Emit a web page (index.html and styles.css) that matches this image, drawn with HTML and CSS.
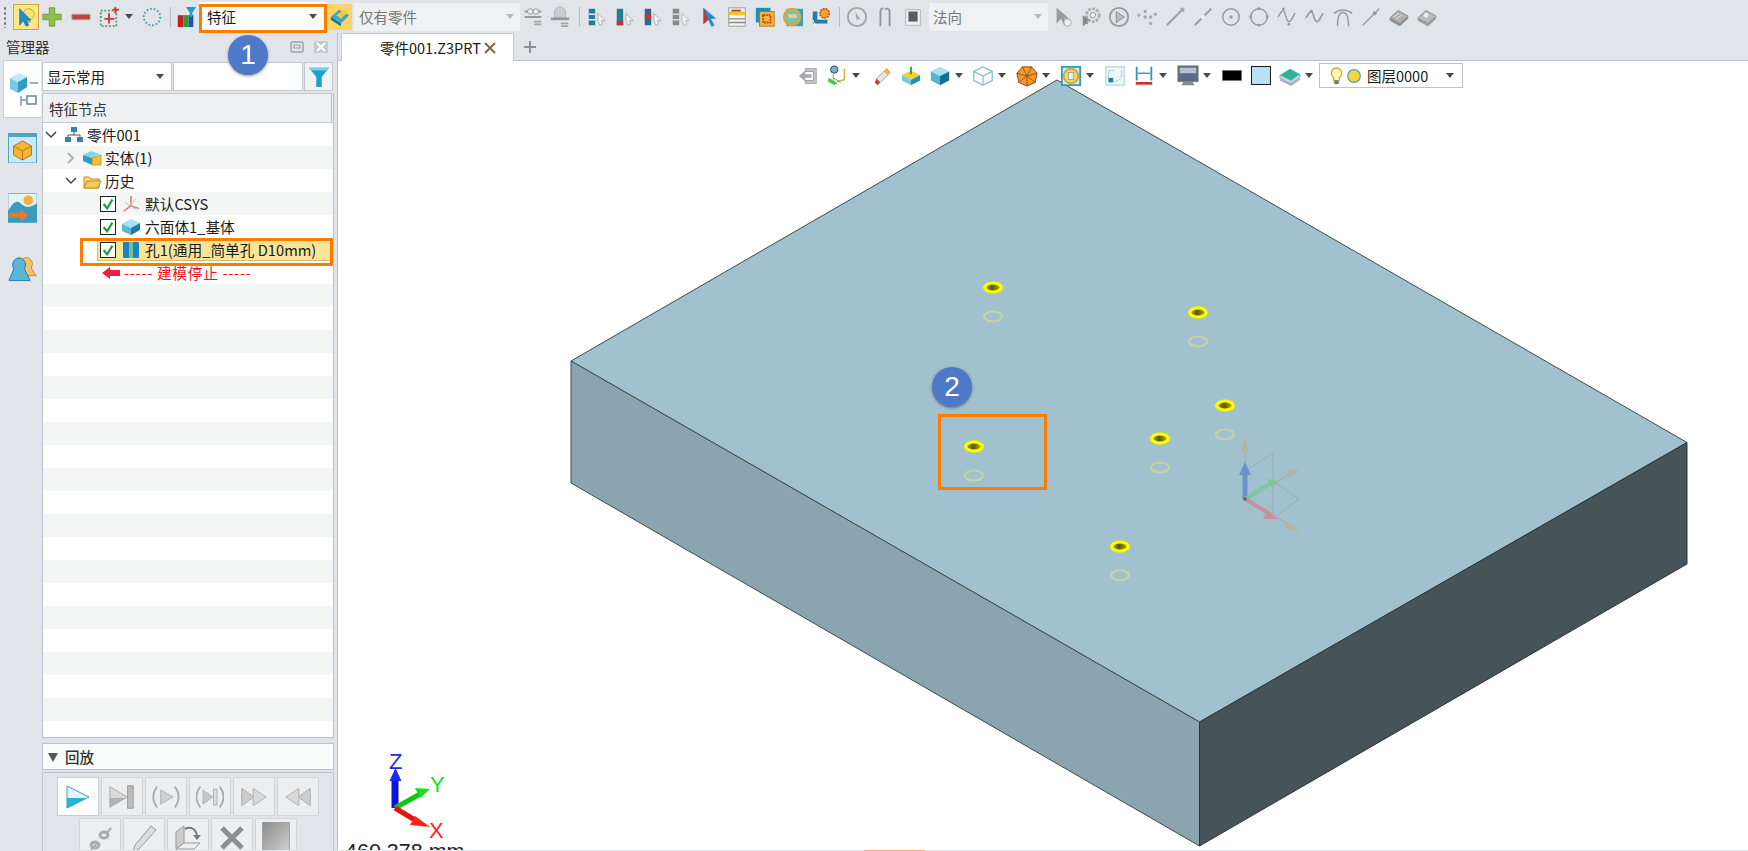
FILE: index.html
```html
<!DOCTYPE html>
<html lang="zh">
<head>
<meta charset="utf-8">
<title>零件001.Z3PRT</title>
<link rel="stylesheet" href="styles.css">
</head>
<body>
<div class="app">
  <div class="toolbar">
    <div class="grip"></div>
    <div class="slot s26 active"><svg viewBox="0 0 24 24"><circle cx="15" cy="9" r="6" fill="#f7e27a" stroke="#c9a227"/><rect x="13" y="15" width="4" height="3" fill="#999"/><path d="M5 3v18l4-5 3 6 3-1-3-6h5z" fill="#1f8fc9" stroke="#0d5f8c" stroke-width=".6"/></svg></div>
    <div class="slot s26"><svg viewBox="0 0 24 24"><path d="M9 2h6v7h7v6h-7v7H9v-7H2V9h7z" fill="#8cc04a" stroke="#6d9c35"/></svg></div>
    <div class="slot s32"><svg viewBox="0 0 24 24"><rect x="2" y="9" width="20" height="6" rx="1" fill="#c8403a" stroke="#a8a8a8"/></svg></div>
    <div class="slot s24"><svg viewBox="0 0 24 24"><rect x="3" y="5" width="17" height="17" fill="none" stroke="#4f9a58" stroke-width="2" stroke-dasharray="2 2"/><path d="M12 8v11M7 14h11" stroke="#d0342c" stroke-width="2"/><path d="M19 1v7M16 4h7" stroke="#d0342c" stroke-width="2"/></svg></div>
    <div class="slot s16"><i class="caret"></i></div>
    <div class="slot s30"><svg viewBox="0 0 24 24"><circle cx="12" cy="12" r="9" fill="none" stroke="#4c9fb5" stroke-width="2" stroke-dasharray="2 2"/></svg></div>
    <div class="sep s6"></div>
    <div class="slot s26"><svg viewBox="0 0 24 24"><rect x="3" y="10" width="6" height="13" fill="#c8201c"/><rect x="9" y="10" width="6" height="13" fill="#2f9a3c"/><rect x="15" y="10" width="5" height="13" fill="#2a4fb0"/><path d="M12 1h11l-4 6v5h-3V7z" fill="#1da0c8"/></svg></div>
    <div class="combo combo-feature"><span>特征</span><i class="caret"></i></div>
    <div class="slot s25 active-sm"><svg viewBox="0 0 24 24"><path d="M2 12l9-8 11 6-9 9z" fill="#3ea6c9"/><path d="M2 12l11 7v3L2 15z" fill="#1c6f90"/><path d="M8 10l8-6 4 3-7 7z" fill="#f4c93b"/></svg></div>
    <div class="combo combo-dim c-part"><span>仅有零件</span><i class="caret light"></i></div>
    <div class="slot s26 mute"><svg viewBox="0 0 24 24"><path d="M3 6h18M3 12h18" stroke="#8a8a8a" stroke-width="2"/><circle cx="9" cy="6" r="3" fill="#eee" stroke="#888"/><circle cx="15" cy="6" r="3" fill="#eee" stroke="#888"/><path d="M13 17h8M13 20h8" stroke="#999" stroke-width="2"/></svg></div>
    <div class="slot s28 mute"><svg viewBox="0 0 24 24"><path d="M6 13V7a6 6 0 0 1 12 0v6z" fill="#c8c8c8" stroke="#aaa"/><path d="M2 14h20" stroke="#8a8a8a" stroke-width="3"/><path d="M13 19h8M13 22h8" stroke="#999" stroke-width="2"/></svg></div>
    <div class="sep s9"></div>
    <div class="slot s28"><svg viewBox="0 0 24 24"><rect x="3" y="3" width="7" height="18" fill="#1f7f95"/><path d="M3 9h7M3 15h7" stroke="#e8eef0" stroke-width="1.5"/><path d="M13 8l8 8-4 0 1 4-3 1-2-5z" fill="#f2f2f2" stroke="#999" stroke-width=".8"/></svg></div>
    <div class="slot s28"><svg viewBox="0 0 24 24"><rect x="3" y="3" width="7" height="18" fill="#1f7f95"/><rect x="3" y="16" width="7" height="5" fill="#c8303a"/><path d="M13 8l8 8-4 0 1 4-3 1-2-5z" fill="#f2f2f2" stroke="#999" stroke-width=".8"/></svg></div>
    <div class="slot s28"><svg viewBox="0 0 24 24"><rect x="3" y="3" width="7" height="18" fill="#1f6f95"/><rect x="3" y="9" width="7" height="6" fill="#c8303a"/><path d="M13 8l8 8-4 0 1 4-3 1-2-5z" fill="#f2f2f2" stroke="#999" stroke-width=".8"/></svg></div>
    <div class="slot s28"><svg viewBox="0 0 24 24"><rect x="3" y="3" width="7" height="18" fill="#8a8a8a"/><path d="M3 9h7M3 15h7" stroke="#ddd" stroke-width="1.5"/><path d="M13 8l8 8-4 0 1 4-3 1-2-5z" fill="#f2f2f2" stroke="#aaa" stroke-width=".8"/></svg></div>
    <div class="slot s28"><svg viewBox="0 0 24 24"><path d="M6 2v18l5-5 4 8 3-2-4-7h6z" fill="#1f8fc9"/><path d="M6 2v18l5-5z" fill="#c8303a"/></svg></div>
    <div class="slot s28"><svg viewBox="0 0 24 24"><rect x="3" y="2" width="18" height="20" fill="#f5f5f5" stroke="#999"/><rect x="3" y="6" width="18" height="4" fill="#f0c233"/><path d="M6 5h10" stroke="#d0342c" stroke-width="2"/><path d="M3 14h18M3 18h18" stroke="#8a8a8a" stroke-width="1.5"/></svg></div>
    <div class="slot s28"><svg viewBox="0 0 24 24"><rect x="2" y="2" width="16" height="16" fill="#1f8fb5"/><rect x="6" y="6" width="16" height="16" fill="#f2b632" stroke="#a87a18"/><rect x="10" y="10" width="8" height="8" fill="none" stroke="#d0342c" stroke-width="2" stroke-dasharray="2 1"/></svg></div>
    <div class="slot s28"><svg viewBox="0 0 24 24"><rect x="5" y="3" width="18" height="19" fill="#3b9fbf"/><circle cx="11" cy="12" r="9" fill="#7fc49a" stroke="#e6a13b" stroke-width="2"/><path d="M6 9h10v4H8z" fill="#f5c9a0"/></svg></div>
    <div class="slot s28"><svg viewBox="0 0 24 24"><path d="M3 6v13h16v-4H8V6z" fill="#1f7fa8"/><circle cx="16" cy="8" r="5" fill="#f2a32b" stroke="#c8501c" stroke-dasharray="2 1" stroke-width="2"/><path d="M3 15l3 7" stroke="#fff"/></svg></div>
    <div class="sep s8"></div>
    <div class="slot s28 mute"><svg viewBox="0 0 24 24"><circle cx="12" cy="12" r="10" fill="none" stroke="#999" stroke-width="2"/><path d="M10 6l6 9-3-1-1 3z" fill="#999"/></svg></div>
    <div class="slot s28 mute"><svg viewBox="0 0 24 24"><path d="M7 22V6c0-3 2-4 3-3M17 22V6c0-3-3-4-5-2" fill="none" stroke="#888" stroke-width="2"/></svg></div>
    <div class="slot s28 mute"><svg viewBox="0 0 24 24"><rect x="4" y="4" width="16" height="17" fill="#f2f2f2" stroke="#aaa"/><rect x="7" y="6" width="10" height="11" fill="#444"/></svg></div>
    <div class="combo combo-dim c-normal"><span>法向</span><i class="caret light"></i></div>
    <div class="slot s28 first-after"><svg viewBox="0 0 24 24"><path d="M5 2v17l5-5 3 7 3-1-3-6h6z" fill="#9a9a9a"/><circle cx="17" cy="18" r="4" fill="#eee" stroke="#aaa"/></svg></div>
    <div class="slot s28"><svg viewBox="0 0 24 24"><circle cx="14" cy="10" r="7" fill="none" stroke="#aaa" stroke-width="3" stroke-dasharray="3 1.5"/><circle cx="14" cy="10" r="3" fill="#fff" stroke="#888"/><path d="M3 10v12l4-3 2 1-1-4h4z" fill="#8a8a8a"/></svg></div>
    <div class="slot s28"><svg viewBox="0 0 24 24"><circle cx="12" cy="12" r="10" fill="none" stroke="#999" stroke-width="2"/><path d="M9 6v12l9-6z" fill="#bbb" stroke="#888"/></svg></div>
    <div class="slot s28"><svg viewBox="0 0 24 24"><g fill="#a8a8a8"><circle cx="3" cy="10" r="1.8"/><circle cx="10" cy="6" r="1.8"/><circle cx="10" cy="12" r="1.8"/><circle cx="16" cy="12" r="1.8"/><circle cx="21" cy="9" r="1.8"/><circle cx="16" cy="19" r="1.8"/></g></svg></div>
    <div class="slot s28"><svg viewBox="0 0 24 24"><path d="M3 21L19 5" stroke="#999" stroke-width="2"/><circle cx="20" cy="4" r="2.5" fill="#aaa"/></svg></div>
    <div class="slot s28"><svg viewBox="0 0 24 24"><path d="M3 21L21 3" stroke="#999" stroke-width="2"/><circle cx="12" cy="12" r="2.5" fill="#eee"/></svg></div>
    <div class="slot s28"><svg viewBox="0 0 24 24"><circle cx="12" cy="12" r="9" fill="none" stroke="#999" stroke-width="1.6"/><circle cx="12" cy="12" r="1.8" fill="#999"/></svg></div>
    <div class="slot s28"><svg viewBox="0 0 24 24"><circle cx="12" cy="12" r="9" fill="none" stroke="#999" stroke-width="1.6"/><g fill="#999"><circle cx="12" cy="3" r="1.6"/><circle cx="3" cy="12" r="1.6"/><circle cx="21" cy="12" r="1.6"/><circle cx="12" cy="21" r="1.6"/></g></svg></div>
    <div class="slot s28"><svg viewBox="0 0 24 24"><path d="M2 12c3-4 4-7 6-7s3 12 6 12 4-6 7-9" fill="none" stroke="#999" stroke-width="1.6"/><g fill="#999"><circle cx="8" cy="3" r="1.5"/><circle cx="14" cy="20" r="1.5"/></g></svg></div>
    <div class="slot s28"><svg viewBox="0 0 24 24"><path d="M2 13c3-4 4-7 6-7s3 11 6 11 4-6 7-9" fill="none" stroke="#999" stroke-width="1.8"/><circle cx="8" cy="6" r="1.8" fill="#999"/></svg></div>
    <div class="slot s28"><svg viewBox="0 0 24 24"><path d="M2 8c6-5 14-5 20 0" fill="none" stroke="#999" stroke-width="1.6"/><path d="M6 22c0-10 2-15 6-15s6 5 6 15" fill="none" stroke="#999" stroke-width="1.6"/></svg></div>
    <div class="slot s28"><svg viewBox="0 0 24 24"><path d="M3 21L21 3" stroke="#999" stroke-width="1.6"/><circle cx="16" cy="8" r="2.2" fill="#999"/></svg></div>
    <div class="slot s28"><svg viewBox="0 0 24 24"><path d="M2 13l9-8 11 6-9 8z" fill="#b0b0b0" stroke="#888"/><path d="M2 13v3l11 6 9-8v-3l-9 8z" fill="#8f8f8f"/><path d="M6 12l6-4M9 14l6-4" stroke="#eee"/></svg></div>
    <div class="slot s28"><svg viewBox="0 0 24 24"><path d="M2 13l9-8 11 6-9 8z" fill="#bdbdbd" stroke="#888"/><path d="M2 13v3l11 6 9-8v-3l-9 8z" fill="#9a9a9a"/><circle cx="11" cy="10" r="2.5" fill="#eee"/></svg></div>
  </div>

  <div class="main">
    <aside class="sidebar">
      <div class="side-title">
        <span class="title-text">管理器</span>
        <svg class="win-ico" viewBox="0 0 14 12"><rect x="1" y="1" width="12" height="10" rx="1.5" fill="none" stroke="#9aa0a5" stroke-width="1.4"/><rect x="4" y="4" width="6" height="3" fill="none" stroke="#9aa0a5"/></svg>
        <svg class="win-ico" viewBox="0 0 14 12"><rect x="0" y="0" width="14" height="12" rx="1.5" fill="#c6cacd"/><path d="M3 2l8 8M11 2l-8 8" stroke="#fff" stroke-width="2"/></svg>
      </div>
      <div class="side-body">
        <nav class="rail">
          <div class="rail-tab on"><svg viewBox="0 0 32 40"><path d="M3 9l9-5 8 4-9 5z" fill="#bfe8f5"/><path d="M3 9l8 4v11l-8-4z" fill="#7cc7e0"/><path d="M11 13l9-5v10l-9 6z" fill="#2f9cc4"/><path d="M23 14h8M14 27v10M14 31h5" stroke="#7d95a5" stroke-width="1.4"/><rect x="20" y="27" width="9" height="8" fill="none" stroke="#5f7f92" stroke-width="1.4"/></svg></div>
          <div class="rail-tab"><svg viewBox="0 0 28 30"><rect x="0" y="0" width="28" height="30" fill="#cbe8f5" stroke="#4ba3c7"/><rect x="0" y="0" width="28" height="4" fill="#4ba3c7"/><path d="M5 13l9-5 9 5v9l-9 5-9-5z" fill="#f5b52e" stroke="#b5771a"/><path d="M5 13l9 5 9-5M14 18v9" stroke="#b5771a" fill="none"/></svg></div>
          <div class="rail-tab"><svg viewBox="0 0 30 30"><rect width="30" height="30" fill="#e4f3f8" stroke="#7ab8cf"/><path d="M0 18c5-8 8-12 13-8s8 6 17 0v20H0z" fill="#3a9cbd"/><circle cx="21" cy="7" r="5" fill="#f5b13c"/><path d="M1 20h12v-4l8 7-8 6v-4H1z" fill="#ee7430"/></svg></div>
          <div class="rail-tab"><svg viewBox="0 0 30 28"><path d="M14 14a6 7 0 1 1 10 0l5 8H17z" fill="#f5c26a" stroke="#c8871f"/><path d="M6 15a6.500 7.500 0 1 1 11 0l6 12H1z" fill="#5ab6d6" stroke="#1d7fa6"/></svg></div>
        </nav>
        <section class="panel">
          <div class="filter-row">
            <div class="combo combo-show"><span>显示常用</span><i class="caret"></i></div>
            <div class="search"></div>
            <div class="filter-btn"><svg viewBox="0 0 24 24"><path d="M1 2h22l-8 10v11h-6V12z" fill="#1da0cc"/><path d="M1 2h22l-3 3H4z" fill="#7ad0e8"/></svg></div>
          </div>
          <div class="head">特征节点</div>
          <div class="tree">
            <div class="row l0"><svg class="chev" viewBox="0 0 12 12"><path d="M1 3l5 5 5-5" fill="none" stroke="#444" stroke-width="1.5"/></svg><svg class="node" viewBox="0 0 20 18"><rect x="7" y="1" width="6" height="5" fill="#2b87b5"/><rect x="1" y="11" width="6" height="5" fill="#2b87b5"/><rect x="13" y="11" width="6" height="5" fill="#2b87b5"/><path d="M10 6v3M4 11V9h12v2" stroke="#555" fill="none"/></svg><span>零件001</span></div>
            <div class="row l1"><svg class="chev" viewBox="0 0 12 12"><path d="M3 1l5 5-5 5" fill="none" stroke="#b0b0b0" stroke-width="1.8"/></svg><svg class="node" viewBox="0 0 20 18"><path d="M1 6l8-4 9 3-8 4z" fill="#8fd3ea"/><path d="M1 6l9 3v7L1 12z" fill="#2f9cc4"/><path d="M10 9l9-3v10H10z" fill="#f5bf33" stroke="#a87a18" stroke-width=".6"/></svg><span>实体(1)</span></div>
            <div class="row l1"><svg class="chev" viewBox="0 0 12 12"><path d="M1 3l5 5 5-5" fill="none" stroke="#444" stroke-width="1.5"/></svg><svg class="node" viewBox="0 0 20 18"><path d="M2 5h5l2 2h8v9H2z" fill="#f7d98a" stroke="#c8871f"/><path d="M2 16l3-7h14l-3 7z" fill="#f9c95a" stroke="#c8871f"/></svg><span>历史</span></div>
            <div class="row l2"><i class="check"><svg viewBox="0 0 16 16"><path d="M3 8l4 5 6-10" fill="none" stroke="#18a038" stroke-width="2.400"/></svg></i><svg class="node" viewBox="0 0 20 20"><path d="M10 1v11" stroke="#d85a5a" stroke-width="1.400"/><path d="M10 12l-8 6" stroke="#e06a6a" stroke-width="1.400"/><path d="M10 12l9 3" stroke="#e06a6a" stroke-width="1.400"/><path d="M3 8l14 9M16 4L4 16" stroke="#b9b9b9"/></svg><span>默认CSYS</span></div>
            <div class="row l2"><i class="check"><svg viewBox="0 0 16 16"><path d="M3 8l4 5 6-10" fill="none" stroke="#18a038" stroke-width="2.400"/></svg></i><svg class="node" viewBox="0 0 20 18"><path d="M1 6l9-5 9 4-9 5z" fill="#a9e0f2"/><path d="M1 6l9 4v7l-9-4z" fill="#5bb6d6"/><path d="M10 10l9-5v7l-9 5z" fill="#1a7ea8"/></svg><span>六面体1_基体</span></div>
            <div class="row l2 selected"><i class="check"><svg viewBox="0 0 16 16"><path d="M3 8l4 5 6-10" fill="none" stroke="#18a038" stroke-width="2.400"/></svg></i><svg class="node" viewBox="0 0 18 18"><rect x="1" y="1" width="16" height="16" rx="1" fill="#1a84c4"/><rect x="7" y="1" width="4" height="16" fill="#7bbf8f"/></svg><span>孔1(通用_简单孔 D10mm)</span></div>
            <div class="row l2 stop"><svg class="stop-ico" viewBox="0 0 20 14"><path d="M1 7l8-6v3h10v6H9v3z" fill="#f0203c"/></svg><span>----- 建模停止 -----</span></div>
            <div class="row"></div><div class="row"></div><div class="row"></div><div class="row"></div><div class="row"></div>
            <div class="row"></div><div class="row"></div><div class="row"></div><div class="row"></div><div class="row"></div>
            <div class="row"></div><div class="row"></div><div class="row"></div><div class="row"></div><div class="row"></div>
            <div class="row"></div><div class="row"></div><div class="row"></div><div class="row"></div>
          </div>
          <div class="replay-head"><i class="tri"></i><span>回放</span></div>
          <div class="replay">
            <div class="btn-row">
              <div class="rbtn on"><svg viewBox="0 0 26 28"><path d="M2 3l22 11L2 25z" fill="#e6f3f8"/><path d="M2 15h20L2 25z" fill="#25b5dc"/><path d="M2 3l22 11L2 25z" fill="none" stroke="#3a9cc0"/></svg></div>
              <div class="rbtn"><svg viewBox="0 0 30 28"><path d="M2 3l19 11L2 25z" fill="#d8d8d8" stroke="#aaa"/><path d="M2 15h17L2 25z" fill="#b0b0b0"/><rect x="21" y="2" width="6" height="24" fill="#bcbcbc" stroke="#999"/></svg></div>
              <div class="rbtn"><svg viewBox="0 0 32 28"><path d="M10 6l14 8-14 8z" fill="#d0d0d0" stroke="#aaa"/><path d="M6 2c-6 8-6 16 0 24M26 2c6 8 6 16 0 24" fill="none" stroke="#aaa" stroke-width="2"/></svg></div>
              <div class="rbtn"><svg viewBox="0 0 32 28"><path d="M8 6l11 8-11 8z" fill="#c8c8c8" stroke="#aaa"/><rect x="20" y="5" width="4" height="18" fill="#ddd" stroke="#aaa"/><path d="M5 2c-6 8-6 16 0 24M27 2c6 8 6 16 0 24" fill="none" stroke="#aaa" stroke-width="2"/></svg></div>
              <div class="rbtn"><svg viewBox="0 0 32 28"><path d="M2 4l14 10L2 24z" fill="#ccc" stroke="#aaa"/><path d="M15 4l15 10-15 10z" fill="#d8d8d8" stroke="#aaa"/></svg></div>
              <div class="rbtn"><svg viewBox="0 0 32 28"><path d="M30 4L16 14l14 10z" fill="#ccc" stroke="#aaa"/><path d="M17 4L2 14l15 10z" fill="#d8d8d8" stroke="#aaa"/></svg></div>
            </div>
            <div class="btn-row">
              <div class="rbtn"><svg viewBox="0 0 28 32"><path d="M5 28l6-7M20 12l5-6" stroke="#aaa" stroke-width="2"/><g fill="none" stroke="#aaa" stroke-width="3"><ellipse cx="9" cy="23" rx="4" ry="3"/><ellipse cx="18" cy="13" rx="4" ry="3"/></g></svg></div>
              <div class="rbtn"><svg viewBox="0 0 28 32"><path d="M3 30l2-7L21 4l5 4L9 27z" fill="#ddd" stroke="#999"/></svg></div>
              <div class="rbtn"><svg viewBox="0 0 30 32"><path d="M3 10l8-6v18l-8 5z" fill="#ccc" stroke="#999"/><path d="M3 27h18l6-6H11z" fill="#eee" stroke="#999"/><path d="M12 7c6-3 11 0 12 7" fill="none" stroke="#777" stroke-width="2"/><path d="M20 13h8l-4 5z" fill="#777"/></svg></div>
              <div class="rbtn"><svg viewBox="0 0 28 32"><path d="M4 6l20 20M24 6L4 26" stroke="#8e8e8e" stroke-width="5"/></svg></div>
              <div class="rbtn"><svg viewBox="0 0 30 36"><defs><linearGradient id="gr" x1="0" y1="0" x2="1" y2="1"><stop offset="0" stop-color="#8c8c8c"/><stop offset="1" stop-color="#d2d2d2"/></linearGradient></defs><rect x="0" y="0" width="30" height="36" fill="url(#gr)" stroke="#999"/></svg></div>
            </div>
          </div>
        </section>
      </div>
    </aside>

    <div class="work">
      <div class="tabbar">
        <div class="tab"><span>零件001.Z3PRT</span><svg class="tab-x" viewBox="0 0 12 12"><path d="M1 1l10 10M11 1L1 11" stroke="#7a6a4a" stroke-width="2"/></svg></div>
        <svg class="tab-add" viewBox="0 0 14 14"><path d="M7 1v12M1 7h12" stroke="#8e8e8e" stroke-width="2"/></svg>
      </div>
      <div class="viewport">
        <svg class="scene" viewBox="338 60 1410 791">
          <defs><linearGradient id="hole"><stop offset="0" stop-color="#a6a600"/><stop offset=".4" stop-color="#565608"/><stop offset="1" stop-color="#a8a800"/></linearGradient></defs>
          <polygon points="1057,79 1687,441.500 1199.500,721 571,360" fill="#a1c1ce" stroke="#3f4a4e"/>
          <polygon points="571,360 1199.500,721 1199.500,845 571,482" fill="#8aa5b0" stroke="#3f4a4e"/>
          <polygon points="1199.500,721 1687,441.500 1687,563 1199.500,845" fill="#465359" stroke="#2c3538"/>
          <g class="rings">
            <ellipse cx="993" cy="315.500" rx="9" ry="5"/><ellipse cx="1198" cy="340.500" rx="9" ry="5"/><ellipse cx="1225" cy="433.500" rx="9" ry="5"/><ellipse cx="1160" cy="466.500" rx="9" ry="5"/><ellipse cx="974" cy="474.500" rx="9" ry="5"/><ellipse cx="1120" cy="574.500" rx="9" ry="5"/>
          </g>
          <g>
            <ellipse class="hy" cx="993" cy="286.500" rx="10" ry="6"/><ellipse class="hd" cx="993" cy="286.500" rx="6.500" ry="3"/>
            <ellipse class="hy" cx="1198" cy="311.500" rx="10" ry="6"/><ellipse class="hd" cx="1198" cy="311.500" rx="6.500" ry="3"/>
            <ellipse class="hy" cx="1225" cy="404.500" rx="10" ry="6"/><ellipse class="hd" cx="1225" cy="404.500" rx="6.500" ry="3"/>
            <ellipse class="hy" cx="1160" cy="437.500" rx="10" ry="6"/><ellipse class="hd" cx="1160" cy="437.500" rx="6.500" ry="3"/>
            <ellipse class="hy" cx="974" cy="445.500" rx="10" ry="6"/><ellipse class="hd" cx="974" cy="445.500" rx="6.500" ry="3"/>
            <ellipse class="hy" cx="1120" cy="545.500" rx="10" ry="6"/><ellipse class="hd" cx="1120" cy="545.500" rx="6.500" ry="3"/>
          </g>
          <g>
            <path class="wire" d="M1245 470l28-18v65M1273 480l26 18-26 19M1245 498l28 19"/>
            <path d="M1245 462v-24M1278 480l21-12M1278 517l21 13" stroke="#a8aa98" stroke-width="1"/>
            <path d="M1245 437l-4 14h8zM1299 468l-13 2 4 7zM1299 530l-12-10-3 7z" fill="#b2b6a2"/>
            <path d="M1245 498v-26" stroke="#6f90cf" stroke-width="5"/><path d="M1245 461l-6 13h12z" fill="#6f90cf"/>
            <path d="M1245 498l28-17" stroke="#7fc79a" stroke-width="4"/><path d="M1279 480l-12-2 5 9z" fill="#7fc79a"/>
            <path d="M1245 498l25 15" stroke="#c9909f" stroke-width="4"/><path d="M1279 518l-12-9-4 9z" fill="#c9909f"/>
            <circle cx="1245" cy="498" r="2" fill="#5f7078"/>
          </g>
          <g>
            <path d="M395 807v-30" stroke="#0a14d8" stroke-width="7"/><path d="M395.500 767l-6 13h12z" fill="#1a2cf0"/>
            <path d="M395 807l27-15" stroke="#10c814" stroke-width="5"/><path d="M430 788l-15-1 5 10z" fill="#16e01a"/>
            <path d="M395 807l25 15" stroke="#e01414" stroke-width="5"/><path d="M430 826l-15-11-5 9z" fill="#ff2222"/>
            <text class="axis ax-z" x="389" y="768">Z</text><text class="axis ax-y" x="430" y="791">Y</text><text class="axis ax-x" x="429" y="837">X</text>
          </g>
        </svg>
        <div class="viewbar">
          <div class="vs"><svg viewBox="0 0 24 24"><path d="M9 4h12v16H9v-3h9V7H9z" fill="#c6c9cc" stroke="#999"/><path d="M2 12l7-6v4h7v4H9v4z" fill="#a8abae"/></svg></div>
          <div class="vs m1"><svg viewBox="0 0 24 24"><circle cx="9" cy="5" r="4" fill="#6db7d6" stroke="#336"/><path d="M3 14l9 5-3 3-7-4z" fill="#57c957"/><path d="M8 10v6M20 4v12l-8 2" stroke="#e8a53a" fill="none" stroke-width="1.500"/><path d="M4 16l8 5M8 14l8 5" stroke="#2fb82f"/></svg></div>
          <i class="caret vc"></i>
          <div class="vs m8"><svg viewBox="0 0 24 24"><path d="M5 15L16 4l4 4L9 19z" fill="#e8e8e8" stroke="#999"/><path d="M5 15l4 4-3 3-3-3z" fill="#d83a3a"/><path d="M13 7l4 4 3-3-4-4z" fill="#f2b632"/></svg></div>
          <div class="vs"><svg viewBox="0 0 24 24"><path d="M2 11l10-5 10 5-10 5z" fill="#f4cf3a"/><path d="M2 11l10 5v6L2 17z" fill="#7cc7e0"/><path d="M12 16l10-5v6l-10 5z" fill="#1f8fb5"/><path d="M12 10V2" stroke="#2c9c3c" stroke-width="2"/></svg></div>
          <div class="vs m1"><svg viewBox="0 0 24 24"><path d="M2 7l10-5 10 5-10 5z" fill="#a9e0f2"/><path d="M2 7l10 5v10L2 17z" fill="#58b4d6"/><path d="M12 12l10-5v10l-10 5z" fill="#136e96"/></svg></div>
          <i class="caret vc"></i>
          <div class="vs m5"><svg viewBox="0 0 24 24"><path d="M2 7l10-5 10 5v10l-10 5-10-5z" fill="#fff" stroke="#6fb4cc" stroke-width="1.200"/><path d="M2 7l10 5 10-5M12 12v10" fill="none" stroke="#6fb4cc" stroke-width="1.200"/></svg></div>
          <i class="caret vc"></i>
          <div class="vs m6"><svg viewBox="0 0 24 24"><path d="M7 2h10l6 7-2 10-9 4-9-4L1 9z" fill="#f09a2a" stroke="#9a3c1c"/><path d="M7 2l5 10 5-10M1 9l11 3 11-3M3 19l9-7 9 7M12 12v11" stroke="#7a3010" stroke-width=".7" fill="none"/></svg></div>
          <i class="caret vc"></i>
          <div class="vs m6"><svg viewBox="0 0 24 24"><rect x="2" y="2" width="20" height="20" fill="#d4ecf5" stroke="#2f9cc4" stroke-width="2"/><circle cx="12" cy="12" r="8" fill="#f4d66a" stroke="#d6a22a" stroke-width="2"/><rect x="9" y="8" width="6" height="8" fill="#eee" stroke="#777" stroke-width=".6"/></svg></div>
          <i class="caret vc"></i>
          <div class="vs m6"><svg viewBox="0 0 24 24"><rect x="2" y="2" width="20" height="20" fill="#eff6fa" stroke="#9cc"/><path d="M5 18V6h6M19 6v4c0 5-3 8-8 8" fill="none" stroke="#8ccae0" stroke-dasharray="3 1"/><rect x="5" y="14" width="5" height="5" fill="#1f7fa8"/></svg></div>
          <div class="vs m1"><svg viewBox="0 0 24 24"><path d="M4 2v15M20 2v15" stroke="#2a9ab8" stroke-width="2"/><path d="M5 9h14" stroke="#2a9ab8" stroke-width="1.500"/><path d="M3 20h18" stroke="#d03030" stroke-width="3"/></svg></div>
          <i class="caret vc"></i>
          <div class="vs m6"><svg viewBox="0 0 24 24"><rect x="1" y="1" width="22" height="17" fill="#5a6a88" stroke="#777"/><rect x="3" y="3" width="18" height="6" fill="#b8c0cc"/><path d="M5 22h14l-2-4H7z" fill="#8a8a8a"/></svg></div>
          <i class="caret vc"></i>
          <div class="vs m6"><span class="swatch-black"></span></div>
          <div class="vs m1"><span class="swatch-blue"></span></div>
          <div class="vs m1"><svg viewBox="0 0 24 24"><path d="M1 11l11-7 11 6-10 7z" fill="#2fb39c"/><path d="M1 11v3l12 6 10-7v-3l-10 7z" fill="#cfe3ea" stroke="#8aa"/><path d="M1 15v2l12 6 10-7v-2l-10 6z" fill="#aac"/></svg></div>
          <i class="caret vc"></i>
          <div class="combo layer">
            <svg class="bulb" viewBox="0 0 14 20"><path d="M7 1a6 6 0 0 1 3 11v3H4v-3A6 6 0 0 1 7 1z" fill="#fff8b0" stroke="#c9a227" stroke-width="1.300"/><rect x="4.500" y="15" width="5" height="4" fill="#777"/></svg>
            <svg class="lamp" viewBox="0 0 14 14"><circle cx="7" cy="7" r="6.300" fill="#f4d83a" stroke="#4c9fc4" stroke-width="1.200"/></svg>
            <span>图层0000</span><i class="caret"></i>
          </div>
        </div>
        <div class="measure">460.378 mm</div>
        <div class="badge badge-two">2</div>
        <div class="mark mark-hole"></div>
      </div>
    </div>
  </div>
  <div class="mark mark-combo"></div>
  <div class="mark mark-row"></div>
  <div class="badge badge-one">1</div>
  <div class="edge"><span class="edge-on"></span></div>
</div>
</body>
</html>
```
FILE: styles.css
```css
* { box-sizing: border-box; }
html, body { margin: 0; height: 100%; overflow: hidden; }
body { background: #e1e5e9; font-family: "Noto Sans CJK SC", "Noto Sans", sans-serif; font-size: 14.5px; color: #1a1a1a; }
.app { position: relative; width: 1748px; height: 851px; overflow: hidden; display: flex; flex-direction: column; }
svg { display: block; }

.toolbar { height: 33px; flex: none; display: flex; align-items: center; padding-left: 3px; }
.grip { width: 10px; height: 22px; background: radial-gradient(circle, #6a6f9a 1px, transparent 1.400px) 0 0 / 4px 5px repeat-y; }
.slot { height: 26px; display: flex; align-items: center; justify-content: center; flex: none; }
.slot svg { width: 22px; height: 22px; }
.s16 { width: 16px; } .s24 { width: 24px; } .s25 { width: 25px; } .s26 { width: 26px; } .s28 { width: 28px; } .s30 { width: 30px; } .s32 { width: 32px; }
.mute svg { opacity: .85; }
.active { background: #fbe68c; border: 1px solid #d4a72c; }
.active-sm { background: #fbd666; }
.first-after { margin-left: 1px; }
.sep { flex: none; height: 24px; position: relative; }
.sep::after { content: ""; position: absolute; left: 50%; top: 2px; bottom: 2px; width: 1px; background: #b6bcc2; }
.s6 { width: 6px; } .s8 { width: 8px; } .s9 { width: 9px; }

.caret { display: block; width: 0; height: 0; flex: none; border: 4px solid transparent; border-top: 5px solid #4a4a4a; border-bottom: 0; }
.caret.light { border-top-color: #b4b8bc; }

.combo { display: flex; align-items: center; justify-content: space-between; background: #fff; flex: none; }
.combo-feature { width: 128px; height: 29px; padding: 0 10px 0 8px; }
.combo-dim { background: #eff1f3; color: #777; }
.c-part { width: 166px; height: 28px; margin-left: 2px; padding: 0 6px 0 5px; }
.c-normal { width: 119px; height: 28px; margin-left: 2px; padding: 0 6px 0 4px; }

.main { flex: 1; display: flex; min-height: 0; }
.sidebar { width: 338px; flex: none; display: flex; flex-direction: column; border-right: 1px solid #b8bfc6; }
.side-title { height: 27px; flex: none; display: flex; align-items: center; padding: 0 9px 0 6px; gap: 10px; }
.title-text { flex: 1; font-size: 14.5px; color: #333; }
.win-ico { width: 14px; height: 12px; }
.side-body { flex: 1; display: flex; min-height: 0; }

.rail { width: 42px; flex: none; padding-left: 2px; display: flex; flex-direction: column; align-items: center; }
.rail-tab { width: 38px; display: flex; justify-content: center; align-items: center; height: 60px; }
.rail-tab svg { width: 29px; height: 30px; }
.rail-tab.on { height: 58px; background: #fff; border: 1px solid #c6ccd2; border-right: 0; }
.rail-tab.on svg { width: 32px; height: 40px; }

.panel { width: 292px; flex: none; display: flex; flex-direction: column; padding-top: 2px; }
.filter-row { height: 29px; flex: none; display: flex; gap: 1px; }
.combo-show { width: 130px; height: 29px; padding: 0 7px 0 4px; border: 1px solid #c3c9ce; }
.search { width: 130px; background: #fff; border: 1px solid #c3c9ce; }
.filter-btn { width: 29px; background: #f1f3f5; border: 1px solid #c3c9ce; display: flex; align-items: center; justify-content: center; }
.filter-btn svg { width: 22px; height: 22px; }
.head { height: 30px; flex: none; margin-top: 2px; padding-left: 6px; line-height: 29px; background: #eef0f2; border: 1px solid #c3c9ce; border-right: 3px double #b8bfc6; color: #333; }
.tree { height: 615px; flex: none; background: #fff; border: 1px solid #bcc3c9; border-top: 0; overflow: hidden; font-size: 14.7px; }
.row { height: 23px; display: flex; align-items: center; line-height: 23px; white-space: nowrap; }
.row:nth-child(even) { background: #f4f5f5; }
.chev { width: 12px; height: 12px; flex: none; }
.node { width: 20px; height: 18px; flex: none; margin: 0 3px 0 2px; }
.l0 { padding-left: 2px; } .l0 .chev { margin-right: 5px; }
.l1 { padding-left: 22px; } .l1 .chev { margin-right: 5px; } .l1 .node { margin: 0 3px 0 0; }
.l2 { padding-left: 58px; }
.l2 .node { margin: 0 4px 0 3px; }
.check { width: 16px; height: 16px; flex: none; display: block; border: 1px solid #222; background: #fff; margin-left: -1px; margin-right: 2px; }
.check svg { width: 14px; height: 14px; }
.row.selected { background: linear-gradient(#f7e29a, #fbe594); box-shadow: inset 0 0 0 1px #d8bd68; margin-left: 54px; padding-left: 4px; }
.stop { color: #f0141e; letter-spacing: .7px; }
.stop-ico { width: 20px; height: 14px; margin: 0 3px 0 0; flex: none; }

.replay-head { height: 27px; flex: none; margin-top: 5px; display: flex; align-items: center; gap: 7px; padding-left: 5px; background: #fafbfb; border: 1px solid #bcc3c9; font-weight: 500; color: #333; }
.tri { width: 0; height: 0; border: 5px solid transparent; border-top: 9px solid #555; border-bottom: 0; margin-top: 1px; }
.replay { flex: 1; margin-top: 2px; padding-top: 4px; border: 1px solid #bcc3c9; border-bottom: 0; display: flex; flex-direction: column; align-items: center; gap: 2px; overflow: hidden; }
.btn-row { display: flex; gap: 2px; flex: none; }
.rbtn { width: 42px; height: 39px; flex: none; background: #eceeef; border: 1px solid #d2d6da; display: flex; align-items: center; justify-content: center; }
.rbtn.on { background: #fff; border-color: #c6ccd2; }
.rbtn svg { width: 28px; height: 28px; }
.btn-row + .btn-row .rbtn svg { width: 30px; height: 32px; }

.work { flex: 1; min-width: 0; display: flex; flex-direction: column; }
.tabbar { height: 27px; flex: none; display: flex; align-items: stretch; padding-left: 3px; }
.tab { width: 173px; background: #fff; border: 1px solid #c3c9ce; border-bottom: 0; display: flex; align-items: center; padding-left: 38px; gap: 3px; white-space: nowrap; margin-bottom: -1px; position: relative; z-index: 1; }
.tab-x { width: 12px; height: 12px; }
.tab-add { width: 14px; height: 14px; align-self: center; margin-left: 9px; }
.viewport { flex: 1; position: relative; background: #fff; border-top: 1px solid #b8bfc6; overflow: hidden; }
.scene { position: absolute; left: 0; top: 0; width: 1410px; height: 791px; }
.rings ellipse { fill: none; stroke: #c4d3a8; stroke-width: 2.2; }
.hy { fill: #ffff00; stroke: #e8e800; stroke-dasharray: 1 1; }
.hd { fill: url(#hole); }
.wire { fill: none; stroke: #8f9ea3; stroke-width: .8; opacity: .7; }
.axis { font-family: "Liberation Sans", sans-serif; font-size: 22px; }
.ax-z { fill: #1a2cf0; } .ax-y { fill: #16e01a; } .ax-x { fill: #ff2222; }

.viewbar { position: absolute; left: 456px; top: 2px; display: flex; align-items: center; height: 25px; }
.vs { width: 28px; height: 25px; flex: none; display: flex; align-items: center; justify-content: center; }
.vs svg { width: 22px; height: 22px; }
.m1 { margin-left: 1px; } .m5 { margin-left: 5px; } .m6 { margin-left: 6px; } .m8 { margin-left: 8px; }
.vc { margin: 0 1px; }
.swatch-black { display: block; width: 20px; height: 11px; background: #000; border: 1px solid #777; }
.swatch-blue { display: block; width: 20px; height: 19px; background: #b8e2f4; border: 1px solid #231a12; }
.layer { width: 144px; height: 25px; margin-left: 5px; border: 1px solid #bcc3c9; padding: 0 8px 0 10px; gap: 4px; justify-content: flex-start; }
.layer span { flex: 1; margin-left: 2px; }
.bulb { width: 13px; height: 18px; flex: none; }
.lamp { width: 14px; height: 14px; flex: none; }

.measure { position: absolute; left: 7px; top: 783px; font-family: "Liberation Sans", sans-serif; font-size: 21.5px; line-height: 16px; color: #222; }
.mark { position: absolute; border: 3px solid #fa7d00; pointer-events: none; }
.mark-combo { left: 199px; top: 4px; width: 128px; height: 29px; }
.mark-row { left: 80px; top: 238px; width: 253px; height: 28px; }
.mark-hole { left: 600px; top: 353px; width: 109px; height: 76px; }
.badge { position: absolute; width: 40px; height: 40px; border-radius: 50%; background: #4e79c8; color: #fff; font-family: "Liberation Sans", sans-serif; font-size: 28px; line-height: 40px; text-align: center; box-shadow: 0 1px 3px rgba(60, 60, 60, .55); }
.badge-one { left: 228px; top: 35px; }
.badge-two { left: 594px; top: 306px; }
.edge { position: absolute; left: 60px; right: 0; bottom: 0; height: 1px; background: #e4e7ea; }
.edge-on { position: absolute; left: 804px; width: 61px; height: 1px; background: #ffb066; }
```
